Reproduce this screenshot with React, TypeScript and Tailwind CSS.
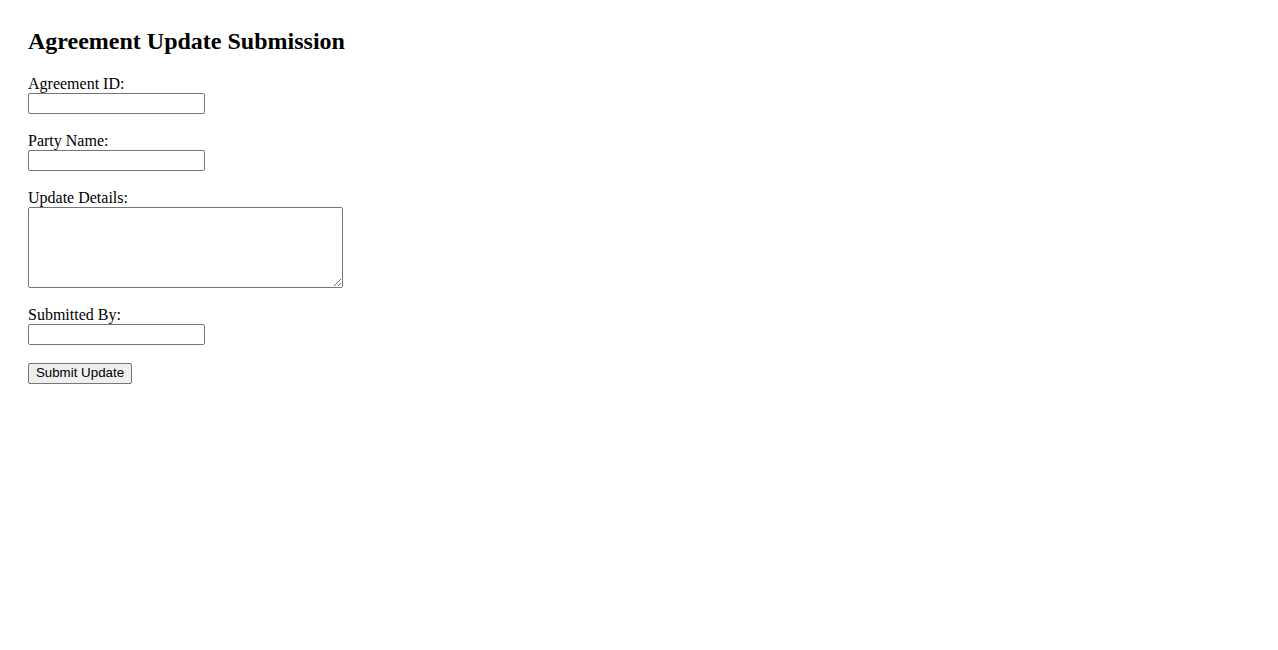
import React from "react";

export default function App() {
  const inputCls =
    "block w-[177px] h-[21px] border border-[#767676] rounded-[2px] bg-white px-[2px] text-[13.33px] font-['Liberation_Sans',Arial,sans-serif] outline-none";
  const labelCls = "block text-[16px] leading-[normal]";
  return (
    <div className="min-h-[650px] bg-white text-black font-['Liberation_Serif','Times_New_Roman',serif] pl-[28px] pt-[28px]">
      <h2 className="text-[24px] font-bold leading-[normal] mb-[20px]">Agreement Update Submission</h2>
      <form onSubmit={(e) => e.preventDefault()}>
        <div className="mb-[17.5px]">
          <label className={labelCls} htmlFor="aid">Agreement ID:</label>
          <input id="aid" type="text" className={inputCls} />
        </div>
        <div className="mb-[18.5px]">
          <label className={labelCls} htmlFor="pname">Party Name:</label>
          <input id="pname" type="text" className={inputCls} />
        </div>
        <div className="mb-[17.5px]">
          <label className={labelCls} htmlFor="details">Update Details:</label>
          <textarea
            id="details"
            className="block w-[315px] h-[81px] border border-[#767676] rounded-[2px] bg-white p-[2px] text-[13.33px] font-['Liberation_Mono',monospace] outline-none resize"
          />
        </div>
        <div className="mb-[18px]">
          <label className={labelCls} htmlFor="sby">Submitted By:</label>
          <input id="sby" type="text" className={inputCls} />
        </div>
        <button
          type="submit"
          className="block w-[104px] h-[21px] border border-[#767676] rounded-[2px] bg-[#efefef] px-[6px] text-[13.33px] leading-none text-black font-['Liberation_Sans',Arial,sans-serif]"
        >
          Submit Update
        </button>
      </form>
    </div>
  );
}
